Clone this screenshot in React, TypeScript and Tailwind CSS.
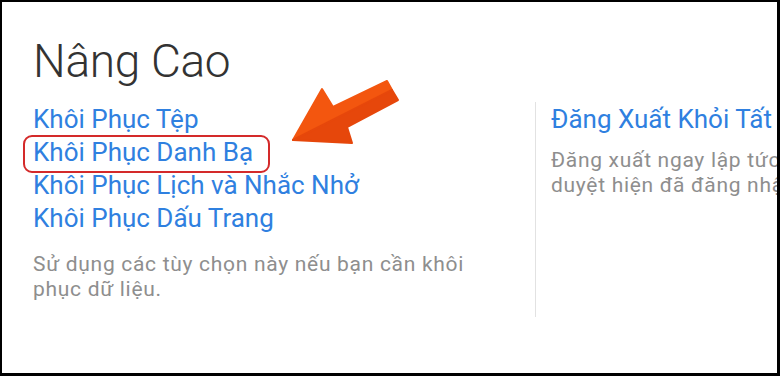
import React from "react";

const font = { fontFamily: "Roboto, Inter, 'Noto Sans', sans-serif" };

export default function App() {
  return (
    <div className="w-[780px] h-[376px] bg-black pt-[2px] pl-[2px] pr-[3px] pb-[3px]" style={font}>
      <div className="relative w-full h-full bg-white overflow-hidden pl-[31px]">
        <h1 className="mt-[33px] text-[46px] leading-[52px] font-light text-[#333333] tracking-[-0.3px] whitespace-nowrap">
          Nâng Cao
        </h1>
        <div className="mt-[15px] flex items-start">
          <div className="w-[502px] shrink-0 pt-[1px]">
            <div className="flex flex-col text-[26px] leading-[33px] text-[#2f80e0] whitespace-nowrap">
              <span>Khôi Phục Tệp</span>
              <span className="relative">
                Khôi Phục Danh Bạ
                <span className="absolute left-[-10px] top-[-1px] w-[247px] h-[38px] border-2 border-[#d42a2a] rounded-[9px]"></span>
              </span>
              <span>Khôi Phục Lịch và Nhắc Nhở</span>
              <span>Khôi Phục Dấu Trang</span>
            </div>
            <p className="mt-[17px] text-[21px] leading-[25px] tracking-[0.7px] text-[#8e8e8e] whitespace-nowrap">
              Sử dụng các tùy chọn này nếu bạn cần khôi
              <br />
              phục dữ liệu.
            </p>
          </div>
          <div className="h-[215px] border-l border-[#e2e2e2] pl-[15px] pt-[1px] whitespace-nowrap">
            <div className="text-[26px] leading-[33px] text-[#2f80e0]">Đăng Xuất Khỏi Tất Cả Trình Duyệt</div>
            <p className="mt-[12px] text-[21px] leading-[25px] tracking-[0.7px] text-[#8e8e8e]">
              Đăng xuất ngay lập tức khỏi tất cả trình
              <br />
              duyệt hiện đã đăng nhập vào iCloud.
            </p>
          </div>
        </div>
        <svg
          className="absolute left-[278px] top-[70px]"
          width="130"
          height="85"
          viewBox="280 72 130 85"
        >
          <polygon
            points="293,140 322,89 333,107 387,81 392,90"
            fill="#f3560f"
            stroke="#f3560f"
            strokeWidth="2"
            strokeLinejoin="round"
          />
          <polygon
            points="293,140 392,90 398,100 347,127 352,143"
            fill="#e6470b"
            stroke="#e6470b"
            strokeWidth="2"
            strokeLinejoin="round"
          />
        </svg>
      </div>
    </div>
  );
}
